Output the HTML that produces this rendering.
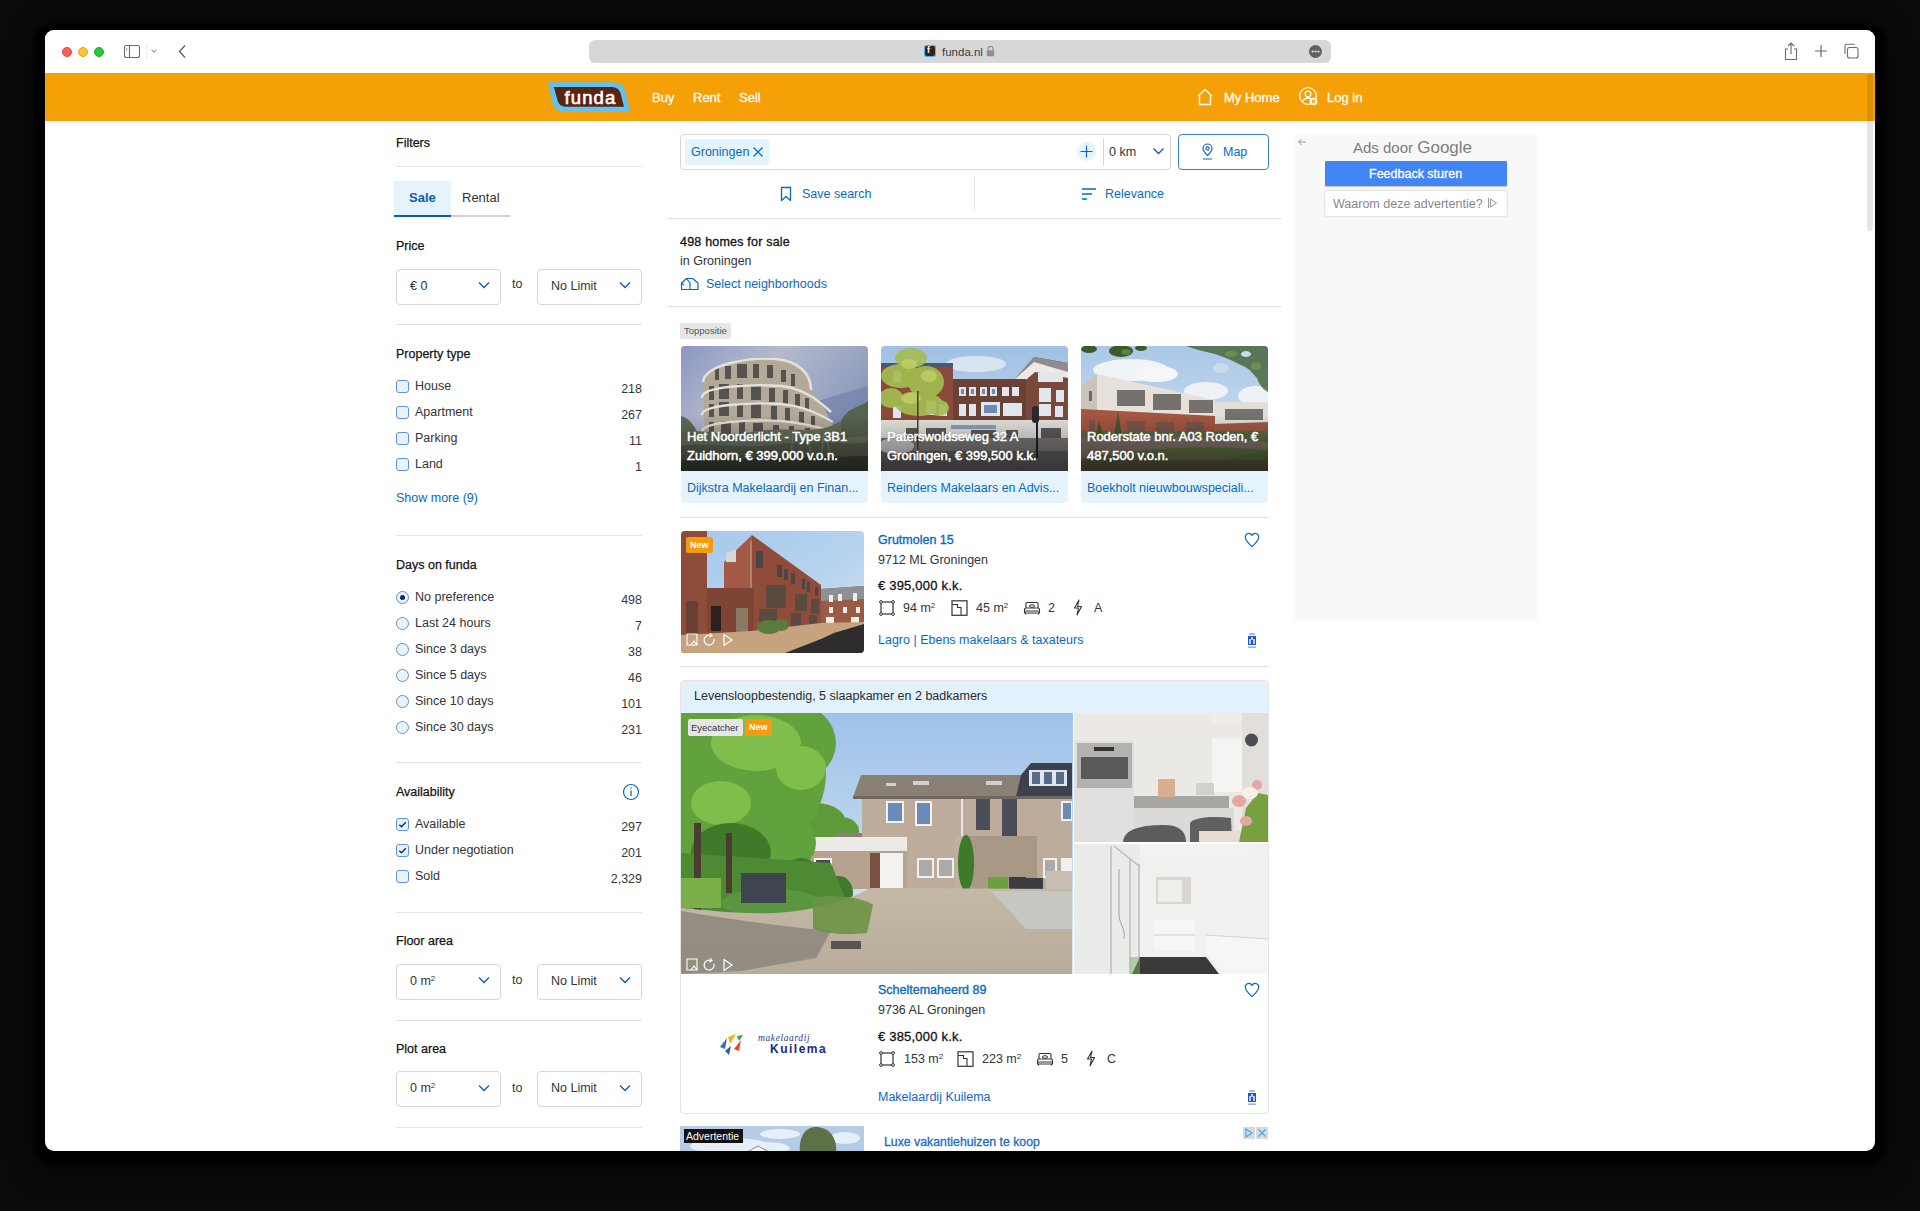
<!DOCTYPE html>
<html><head><meta charset="utf-8">
<style>
*{box-sizing:border-box;margin:0;padding:0}
html,body{width:1920px;height:1211px;overflow:hidden;background:#0b0b0b;font-family:"Liberation Sans",sans-serif}
.a{position:absolute}
#win{position:absolute;left:45px;top:30px;width:1830px;height:1121px;background:#fff;border-radius:9px;overflow:hidden;box-shadow:0 4px 3px 10px #000,0 8px 24px 16px rgba(0,0,0,.55)}
#tb{position:absolute;left:0;top:0;width:1830px;height:43px;background:#fff;border-bottom:0}
#hdr{position:absolute;left:0;top:43px;width:1830px;height:48px;background:#f4a006}
.t{position:absolute;white-space:nowrap;line-height:1}
.lbl{font-size:12.5px;color:#343434}
.hd{font-size:12.5px;color:#141414;-webkit-text-stroke:0.25px #141414}
.cnt{font-size:12.5px;color:#383838;text-align:right}
.hr{position:absolute;height:1px;background:#e3e3e3}
.cb{position:absolute;width:13px;height:13px;border:1px solid #5d93d1;border-radius:3px;background:#e8f4fd}
.rd{position:absolute;width:13px;height:13px;border:1px solid #5d93d1;border-radius:50%;background:#e8f4fd}
.sel{position:absolute;height:36px;border:1px solid #d6d6d6;border-radius:4px;background:#fff}
.blue{color:#0b6ab8}
</style></head>
<body>
<div id="win">
  <div id="tb">
    <div class="a" style="left:16.5px;top:16.5px;width:10.5px;height:10.5px;border-radius:50%;background:#fd5b55;border:0.5px solid #e0443e"></div>
    <div class="a" style="left:32.5px;top:16.5px;width:10.5px;height:10.5px;border-radius:50%;background:#fec52f;border:0.5px solid #e2a52a"></div>
    <div class="a" style="left:48.5px;top:16.5px;width:10.5px;height:10.5px;border-radius:50%;background:#28c840;border:0.5px solid #1aab29"></div>
    <!-- sidebar icon -->
    <svg class="a" style="left:78px;top:14px" width="18" height="15" viewBox="0 0 18 15"><rect x="1.5" y="1.5" width="15" height="12" rx="2" fill="none" stroke="#6b6b6b" stroke-width="1.1"/><line x1="6.5" y1="1.5" x2="6.5" y2="13.5" stroke="#6b6b6b" stroke-width="1.1"/><line x1="3.8" y1="4" x2="3.8" y2="7" stroke="#8a8a8a" stroke-width="0.8"/></svg>
    <div class="a" style="left:101px;top:14px;width:1px;height:15px;background:#ececec"></div>
    <svg class="a" style="left:105px;top:18px" width="8" height="6" viewBox="0 0 8 6"><path d="M1.5 1.8 L4 4.2 L6.5 1.8" fill="none" stroke="#6b6b6b" stroke-width="1"/></svg>
    <svg class="a" style="left:131.5px;top:14px" width="10" height="15" viewBox="0 0 10 15"><path d="M8 1.5 L2.5 7.5 L8 13.5" fill="none" stroke="#5b5b5b" stroke-width="1.3"/></svg>
    <!-- url bar -->
    <div class="a" style="left:544px;top:10px;width:742px;height:23px;border-radius:6px;background:#d7d7d7"></div>
    <div class="a" style="left:879px;top:15px;width:12px;height:12px;border-radius:2px;background:#4fb4e8"></div>
    <div class="a" style="left:880px;top:16px;width:10px;height:10px;border-radius:2px;background:#3b1e14"></div>
    <div class="t" style="left:882px;top:16px;font-size:9px;color:#fff;font-weight:bold">f</div>
    <div class="t" style="left:897px;top:17px;font-size:11.5px;color:#3c3c3c">funda.nl</div>
    <svg class="a" style="left:941px;top:15px" width="9" height="12" viewBox="0 0 9 12"><path d="M2 5.5 V3.8 A2.5 2.5 0 0 1 7 3.8 V5.5" fill="none" stroke="#8e8e8e" stroke-width="1.2"/><rect x="0.8" y="5.3" width="7.4" height="6" rx="1" fill="#8e8e8e"/></svg>
    <div class="a" style="left:1264px;top:15px;width:13px;height:13px;border-radius:50%;background:#606060"></div>
    <svg class="a" style="left:1264px;top:15px" width="13" height="13" viewBox="0 0 13 13"><circle cx="3.6" cy="6.5" r="1.1" fill="#e8e8e8"/><circle cx="6.5" cy="6.5" r="1.1" fill="#e8e8e8"/><circle cx="9.4" cy="6.5" r="1.1" fill="#e8e8e8"/></svg>
    <!-- right icons -->
    <svg class="a" style="left:1738px;top:11px" width="16" height="20" viewBox="0 0 16 20"><path d="M5 8 H2.5 V18.5 H13.5 V8 H11" fill="none" stroke="#6b6b6b" stroke-width="1.1"/><path d="M8 13 V2 M5 5 L8 2 L11 5" fill="none" stroke="#6b6b6b" stroke-width="1.1"/></svg>
    <svg class="a" style="left:1768px;top:13px" width="16" height="16" viewBox="0 0 16 16"><path d="M8 2 V14 M2 8 H14" fill="none" stroke="#6b6b6b" stroke-width="1.2"/></svg>
    <svg class="a" style="left:1797px;top:12px" width="18" height="18" viewBox="0 0 18 18"><rect x="5.5" y="5.5" width="10.5" height="10.5" rx="2" fill="none" stroke="#6b6b6b" stroke-width="1.1"/><path d="M3 12 V4 A1.8 1.8 0 0 1 4.8 2.2 H12.5" fill="none" stroke="#6b6b6b" stroke-width="1.1"/></svg>
  </div>
  <div id="hdr">
    <svg class="a" style="left:500px;top:8px" width="86" height="32" viewBox="0 0 86 32">
      <path d="M3 1.3 H66 C74 1.3 78 4 80 9 L85 30.7 H21 C13 30.7 9 27 7.5 22 Z" fill="#5ec3f2"/>
      <path d="M8.8 6 H66 C71 6 74 8 75.5 12 L79 25.8 H22 C16 25.8 13.5 23 12.5 19 Z" fill="#5a2415"/>
      <text x="19.5" y="22.6" font-family="Liberation Sans" font-size="18.5" fill="#fff" stroke="#fff" stroke-width="0.6" letter-spacing="1.1">funda</text>
    </svg>
    <div class="t" style="left:607px;top:18px;font-size:13px;color:#fff;-webkit-text-stroke:0.3px #fff">Buy</div>
    <div class="t" style="left:648px;top:18px;font-size:13px;color:#fff;-webkit-text-stroke:0.3px #fff">Rent</div>
    <div class="t" style="left:694px;top:18px;font-size:13px;color:#fff;-webkit-text-stroke:0.3px #fff">Sell</div>
    <svg class="a" style="left:1150px;top:14px" width="20" height="20" viewBox="0 0 20 20"><path d="M3 9 L10 2.5 L17 9 M4.5 8 V17.5 H15.5 V8" fill="none" stroke="#fff" stroke-width="1.4" stroke-linejoin="round"/></svg>
    <div class="t" style="left:1179px;top:18px;font-size:13px;color:#fff;-webkit-text-stroke:0.3px #fff">My Home</div>
    <svg class="a" style="left:1253px;top:13px" width="22" height="22" viewBox="0 0 22 22"><circle cx="10" cy="10" r="8.3" fill="none" stroke="#fff" stroke-width="1.3"/><circle cx="10" cy="8" r="2.8" fill="none" stroke="#fff" stroke-width="1.3"/><path d="M4.5 15.5 C6 12.8 8 12 10 12 C11 12 12 12.2 13 12.6" fill="none" stroke="#fff" stroke-width="1.3"/><circle cx="15.5" cy="15.5" r="3.8" fill="#fff"/><path d="M14 14 L17 17 M17 14 L14 17" stroke="#f4a006" stroke-width="1.1"/></svg>
    <div class="t" style="left:1282px;top:18px;font-size:13px;color:#fff;-webkit-text-stroke:0.3px #fff">Log in</div>
  </div>
  <div id="pg" class="a" style="left:-45px;top:-30px;width:1920px;height:1211px">
  <!-- LEFT PANEL -->
  <div class="t hd" style="left:396px;top:137px">Filters</div>
  <div class="hr" style="left:396px;top:166px;width:246px"></div>
  <div class="a" style="left:394px;top:181px;width:57px;height:36px;background:#e5f3fd"></div>
  <div class="a" style="left:394px;top:215px;width:57px;height:2px;background:#0b5cb0"></div>
  <div class="a" style="left:451px;top:215px;width:59px;height:2px;background:#d3d3d3"></div>
  <div class="t" style="left:409px;top:191px;font-size:13px;color:#0b5cb0;font-weight:bold">Sale</div>
  <div class="t" style="left:462px;top:191px;font-size:13px;color:#333">Rental</div>
  <div class="t hd" style="left:396px;top:240px">Price</div>
  <div class="sel" style="left:396px;top:269px;width:105px"></div>
  <div class="t lbl" style="left:410px;top:280px">€ 0</div>
  <div class="t lbl" style="left:512px;top:278px">to</div>
  <div class="sel" style="left:537px;top:269px;width:105px"></div>
  <div class="t lbl" style="left:551px;top:280px">No Limit</div>
  <div class="hr" style="left:396px;top:324px;width:246px"></div>

  <div class="t hd" style="left:396px;top:348px">Property type</div>
  <div class="cb" style="left:396px;top:380px"></div><div class="t lbl" style="left:415px;top:380px">House</div><div class="t cnt" style="left:600px;width:42px;top:383px">218</div>
  <div class="cb" style="left:396px;top:406px"></div><div class="t lbl" style="left:415px;top:406px">Apartment</div><div class="t cnt" style="left:600px;width:42px;top:409px">267</div>
  <div class="cb" style="left:396px;top:432px"></div><div class="t lbl" style="left:415px;top:432px">Parking</div><div class="t cnt" style="left:600px;width:42px;top:435px">11</div>
  <div class="cb" style="left:396px;top:458px"></div><div class="t lbl" style="left:415px;top:458px">Land</div><div class="t cnt" style="left:600px;width:42px;top:461px">1</div>
  <div class="t lbl blue" style="left:396px;top:492px">Show more (9)</div>
  <div class="hr" style="left:396px;top:535px;width:246px"></div>

  <div class="t hd" style="left:396px;top:559px">Days on funda</div>
  <div class="rd" style="left:396px;top:591px"></div><div class="a" style="left:400px;top:595px;width:5px;height:5px;border-radius:50%;background:#0a2a6b"></div><div class="t lbl" style="left:415px;top:591px">No preference</div><div class="t cnt" style="left:600px;width:42px;top:594px">498</div>
  <div class="rd" style="left:396px;top:617px"></div><div class="t lbl" style="left:415px;top:617px">Last 24 hours</div><div class="t cnt" style="left:600px;width:42px;top:620px">7</div>
  <div class="rd" style="left:396px;top:643px"></div><div class="t lbl" style="left:415px;top:643px">Since 3 days</div><div class="t cnt" style="left:600px;width:42px;top:646px">38</div>
  <div class="rd" style="left:396px;top:669px"></div><div class="t lbl" style="left:415px;top:669px">Since 5 days</div><div class="t cnt" style="left:600px;width:42px;top:672px">46</div>
  <div class="rd" style="left:396px;top:695px"></div><div class="t lbl" style="left:415px;top:695px">Since 10 days</div><div class="t cnt" style="left:600px;width:42px;top:698px">101</div>
  <div class="rd" style="left:396px;top:721px"></div><div class="t lbl" style="left:415px;top:721px">Since 30 days</div><div class="t cnt" style="left:600px;width:42px;top:724px">231</div>
  <div class="hr" style="left:396px;top:762px;width:246px"></div>

  <div class="t hd" style="left:396px;top:786px">Availability</div>
  <svg class="a" style="left:622px;top:783px" width="18" height="18" viewBox="0 0 18 18"><circle cx="9" cy="9" r="7.5" fill="none" stroke="#0b6ab8" stroke-width="1.2"/><path d="M9 7.5 V13 M9 4.6 V5.8" stroke="#0b6ab8" stroke-width="1.3"/></svg>
  <div class="cb" style="left:396px;top:818px"></div><svg class="a" style="left:396px;top:818px" width="13" height="13" viewBox="0 0 13 13"><path d="M3.3 6.7 L5.5 8.8 L9.8 4.3" fill="none" stroke="#0a2a6b" stroke-width="1.3"/></svg><div class="t lbl" style="left:415px;top:818px">Available</div><div class="t cnt" style="left:590px;width:52px;top:821px">297</div>
  <div class="cb" style="left:396px;top:844px"></div><svg class="a" style="left:396px;top:844px" width="13" height="13" viewBox="0 0 13 13"><path d="M3.3 6.7 L5.5 8.8 L9.8 4.3" fill="none" stroke="#0a2a6b" stroke-width="1.3"/></svg><div class="t lbl" style="left:415px;top:844px">Under negotiation</div><div class="t cnt" style="left:590px;width:52px;top:847px">201</div>
  <div class="cb" style="left:396px;top:870px"></div><div class="t lbl" style="left:415px;top:870px">Sold</div><div class="t cnt" style="left:590px;width:52px;top:873px">2,329</div>
  <div class="hr" style="left:396px;top:912px;width:246px"></div>

  <div class="t hd" style="left:396px;top:935px">Floor area</div>
  <div class="sel" style="left:396px;top:964px;width:105px"></div>
  <div class="t lbl" style="left:410px;top:975px">0 m<sup style="font-size:8px;vertical-align:4px">2</sup></div>
  <div class="t lbl" style="left:512px;top:974px">to</div>
  <div class="sel" style="left:537px;top:964px;width:105px"></div>
  <div class="t lbl" style="left:551px;top:975px">No Limit</div>
  <div class="hr" style="left:396px;top:1020px;width:246px"></div>

  <div class="t hd" style="left:396px;top:1043px">Plot area</div>
  <div class="sel" style="left:396px;top:1071px;width:105px"></div>
  <div class="t lbl" style="left:410px;top:1082px">0 m<sup style="font-size:8px;vertical-align:4px">2</sup></div>
  <div class="t lbl" style="left:512px;top:1082px">to</div>
  <div class="sel" style="left:537px;top:1071px;width:105px"></div>
  <div class="t lbl" style="left:551px;top:1082px">No Limit</div>
  <div class="hr" style="left:396px;top:1127px;width:246px"></div>
  <svg class="a" style="left:478px;top:281px" width="12" height="8" viewBox="0 0 12 8"><path d="M1 1.5 L6 6.5 L11 1.5" fill="none" stroke="#0b5cb0" stroke-width="1.3"/></svg><svg class="a" style="left:619px;top:281px" width="12" height="8" viewBox="0 0 12 8"><path d="M1 1.5 L6 6.5 L11 1.5" fill="none" stroke="#0b5cb0" stroke-width="1.3"/></svg><svg class="a" style="left:478px;top:976px" width="12" height="8" viewBox="0 0 12 8"><path d="M1 1.5 L6 6.5 L11 1.5" fill="none" stroke="#0b5cb0" stroke-width="1.3"/></svg><svg class="a" style="left:619px;top:976px" width="12" height="8" viewBox="0 0 12 8"><path d="M1 1.5 L6 6.5 L11 1.5" fill="none" stroke="#0b5cb0" stroke-width="1.3"/></svg><svg class="a" style="left:478px;top:1084px" width="12" height="8" viewBox="0 0 12 8"><path d="M1 1.5 L6 6.5 L11 1.5" fill="none" stroke="#0b5cb0" stroke-width="1.3"/></svg><svg class="a" style="left:619px;top:1084px" width="12" height="8" viewBox="0 0 12 8"><path d="M1 1.5 L6 6.5 L11 1.5" fill="none" stroke="#0b5cb0" stroke-width="1.3"/></svg>
  <!-- MAIN COLUMN -->
  <div class="a" style="left:680px;top:134px;width:491px;height:36px;border:1px solid #d6d6d6;border-radius:4px"></div>
  <div class="a" style="left:685px;top:139px;width:84px;height:26px;background:#e5f3fd;border-radius:3px"></div>
  <div class="t" style="left:691px;top:146px;font-size:12.5px;color:#0b6ab8">Groningen</div>
  <svg class="a" style="left:752px;top:146px" width="12" height="12" viewBox="0 0 12 12"><path d="M1.5 1.5 L10.5 10.5 M10.5 1.5 L1.5 10.5" stroke="#0b6ab8" stroke-width="1.2"/></svg>
  <div class="a" style="left:1077px;top:142px;width:19px;height:19px;border-radius:50%;background:#e5f3fd"></div>
  <svg class="a" style="left:1079px;top:144px" width="15" height="15" viewBox="0 0 15 15"><path d="M7.5 1.5 V13.5 M1.5 7.5 H13.5" stroke="#0b6ab8" stroke-width="1.2"/></svg>
  <div class="a" style="left:1103px;top:138px;width:1px;height:28px;background:#d6d6d6"></div>
  <div class="t lbl" style="left:1109px;top:146px">0 km</div>
  <svg class="a" style="left:1152px;top:147px" width="13" height="9" viewBox="0 0 13 9"><path d="M1.5 1.5 L6.5 6.5 L11.5 1.5" fill="none" stroke="#0b5cb0" stroke-width="1.3"/></svg>
  <div class="a" style="left:1178px;top:134px;width:91px;height:36px;border:1px solid #3b7cc6;border-radius:4px"></div>
  <svg class="a" style="left:1200px;top:143px" width="15" height="18" viewBox="0 0 15 18"><path d="M7.5 12.5 C4.5 9.5 3 7.5 3 5.5 A4.5 4.5 0 0 1 12 5.5 C12 7.5 10.5 9.5 7.5 12.5 Z" fill="none" stroke="#0b6ab8" stroke-width="1.2"/><circle cx="7.5" cy="5.5" r="1.6" fill="none" stroke="#0b6ab8" stroke-width="1.1"/><path d="M3 16 H12" stroke="#0b6ab8" stroke-width="1.2"/></svg>
  <div class="t" style="left:1223px;top:146px;font-size:12.5px;color:#0b6ab8">Map</div>

  <svg class="a" style="left:779px;top:186px" width="14" height="16" viewBox="0 0 14 16"><path d="M2.5 1.5 H11.5 V14.5 L7 10.5 L2.5 14.5 Z" fill="none" stroke="#0b6ab8" stroke-width="1.3" stroke-linejoin="round"/></svg>
  <div class="t" style="left:802px;top:188px;font-size:12.5px;color:#0b6ab8">Save search</div>
  <div class="a" style="left:974px;top:176px;width:1px;height:36px;background:#e6e6e6"></div>
  <svg class="a" style="left:1081px;top:187px" width="16" height="14" viewBox="0 0 16 14"><path d="M1 2 H15 M1 7 H11 M1 12 H6" stroke="#0b6ab8" stroke-width="1.3"/></svg>
  <div class="t" style="left:1105px;top:188px;font-size:12.5px;color:#0b6ab8">Relevance</div>
  <div class="hr" style="left:667px;top:218px;width:615px"></div>

  <div class="t" style="left:680px;top:236px;font-size:12.5px;color:#111;-webkit-text-stroke:0.3px #111;letter-spacing:0.2px">498 homes for sale</div>
  <div class="t lbl" style="left:680px;top:255px">in Groningen</div>
  <svg class="a" style="left:680px;top:276px" width="20" height="15" viewBox="0 0 20 15"><path d="M1.5 13.5 V7 L6.5 2.5 H12.5 L18 7 V13.5 Z M6.5 2.5 L10 7 V13.5 M1.5 7 L4 9" fill="none" stroke="#0b6ab8" stroke-width="1.2" stroke-linejoin="round"/></svg>
  <div class="t" style="left:706px;top:278px;font-size:12.5px;color:#0b6ab8">Select neighborhoods</div>
  <div class="hr" style="left:667px;top:306px;width:615px"></div>

  <div class="a" style="left:680px;top:323px;width:51px;height:16px;background:#e6e6e6;border-radius:2px"></div>
  <div class="t" style="left:684px;top:326px;font-size:9.5px;color:#555">Toppositie</div>
  <!-- TOP CARDS -->
  <div class="a" style="left:681px;top:346px;width:187px;height:157px;border-radius:4px;overflow:hidden;background:#e5f3fd">
    <svg class="a" style="left:0;top:0" width="187" height="125" viewBox="0 0 187 125" preserveAspectRatio="none">
      <defs><linearGradient id="s1" x1="0" y1="0" x2="1" y2="0.6"><stop offset="0" stop-color="#8a97c6"/><stop offset=".4" stop-color="#b4bacb"/><stop offset=".75" stop-color="#98a4c2"/><stop offset="1" stop-color="#7f8eb6"/></linearGradient>
      <linearGradient id="ov" x1="0" y1="0" x2="0" y2="1"><stop offset="0" stop-color="#000" stop-opacity="0"/><stop offset=".55" stop-color="#000" stop-opacity="0"/><stop offset="1" stop-color="#000" stop-opacity=".45"/></linearGradient>
      <filter id="bl" x="0" y="0" width="1" height="1"><feGaussianBlur stdDeviation="0.5"/></filter></defs>
      <rect width="187" height="125" fill="url(#s1)"/>
      <path d="M120 60 L187 40 L187 70 L140 80 Z" fill="#6f7ea6" opacity=".6"/>
      <g filter="url(#bl)">
      <path d="M24 100 L22 34 C30 18 70 12 95 14 C118 17 128 30 130 42 C140 55 148 70 152 82 L152 100 Z" fill="#b3a999"/>
      <g fill="#55524f">
        <rect x="34" y="22" width="4" height="12"/><rect x="44" y="20" width="6" height="13"/><rect x="56" y="18" width="10" height="14"/><rect x="72" y="18" width="6" height="14"/><rect x="86" y="19" width="6" height="13"/><rect x="100" y="24" width="5" height="12"/><rect x="110" y="28" width="4" height="12"/>
        <rect x="28" y="40" width="5" height="14"/><rect x="38" y="38" width="10" height="15"/><rect x="56" y="38" width="6" height="15"/><rect x="70" y="40" width="10" height="14"/><rect x="88" y="42" width="6" height="14"/><rect x="102" y="44" width="5" height="14"/><rect x="114" y="48" width="5" height="13"/><rect x="124" y="52" width="4" height="12"/>
        <rect x="28" y="58" width="5" height="13"/><rect x="38" y="56" width="10" height="14"/><rect x="56" y="57" width="6" height="14"/><rect x="70" y="58" width="10" height="14"/><rect x="90" y="60" width="6" height="14"/><rect x="104" y="62" width="5" height="14"/><rect x="118" y="66" width="5" height="12"/><rect x="130" y="70" width="4" height="10"/>
        <rect x="28" y="76" width="5" height="14"/><rect x="40" y="75" width="10" height="14"/><rect x="58" y="76" width="6" height="14"/><rect x="72" y="77" width="10" height="14"/><rect x="92" y="79" width="6" height="14"/><rect x="108" y="80" width="5" height="12"/><rect x="124" y="82" width="5" height="10"/>
      </g>
      <g fill="none" stroke="#e6e1d8" stroke-width="2.4">
        <path d="M22 36 C24 18 70 11 95 13 C118 15 130 28 130 44"/>
        <path d="M21 52 C20 40 70 38 100 40 C120 42 135 52 150 66"/>
        <path d="M21 69 C20 59 70 56 100 58 C122 60 138 68 152 76"/>
        <path d="M21 86 C20 76 70 73 100 75 C124 77 140 82 154 86"/>
      </g>
      <path d="M0 88 C20 80 40 92 70 86 C100 80 130 88 150 80 C165 72 175 70 187 60 L187 125 L0 125 Z" fill="#66705d"/>
      <path d="M0 70 C8 72 14 80 18 90 L0 92 Z" fill="#5d6a58"/>
      <path d="M160 75 C168 60 178 62 187 55 L187 90 L160 92 Z" fill="#56644f"/>
      <path d="M0 100 C30 96 60 104 100 98 C140 94 160 100 187 96 L187 125 L0 125 Z" fill="#545b4c"/>
      <path d="M0 114 L187 110 L187 125 L0 125 Z" fill="#3b3f36"/>
      <g stroke="#8d9284" stroke-width="1" opacity=".7"><path d="M130 112 L128 92"/><path d="M140 110 L143 90"/><path d="M150 112 L146 94"/><path d="M110 108 L112 90"/></g>
      </g>
      <rect width="187" height="125" fill="url(#ov)"/>
    </svg>
    <div class="t" style="left:6px;top:84px;font-size:13px;color:#fff;-webkit-text-stroke:0.55px #fff;text-shadow:0 0 2px rgba(0,0,0,.45)">Het Noorderlicht - Type 3B1</div>
    <div class="t" style="left:6px;top:103px;font-size:13px;color:#fff;-webkit-text-stroke:0.55px #fff;text-shadow:0 0 2px rgba(0,0,0,.45)">Zuidhorn, € 399,000 v.o.n.</div>
    <div class="t" style="left:6px;top:136px;font-size:12.5px;color:#0b6ab8">Dijkstra Makelaardij en Finan...</div>
  </div>
  <div class="a" style="left:881px;top:346px;width:187px;height:157px;border-radius:4px;overflow:hidden;background:#e5f3fd">
    <svg class="a" style="left:0;top:0" width="187" height="125" viewBox="0 0 187 125" preserveAspectRatio="none">
      <defs><linearGradient id="s2" x1="0" y1="0" x2="0" y2="1"><stop offset="0" stop-color="#9fc0e4"/><stop offset="1" stop-color="#d5e0ea"/></linearGradient></defs>
      <rect width="187" height="125" fill="url(#s2)"/>
      <g filter="url(#bl)">
      <ellipse cx="95" cy="18" rx="30" ry="8" fill="#e4ecf2" opacity=".8"/>
      <path d="M134 33 L153 11 L187 17 L187 95 L134 95 Z" fill="#7a4a3a"/>
      <path d="M134 33 L153 11 L187 17 L187 30 L155 24 L140 38 Z" fill="#8e8c92"/>
      <path d="M134 33 L153 16 L187 26 L187 32 L154 26 L138 40 Z" fill="#ece8e2"/>
      <rect x="70" y="33" width="75" height="45" fill="#6a4236"/>
      <rect x="0" y="17" width="72" height="78" fill="#8a4c3c"/>
      <rect x="0" y="17" width="72" height="4" fill="#4e5870"/>
      <g fill="#dfe6ee"><rect x="78" y="41" width="7" height="9"/><rect x="88" y="41" width="7" height="9"/><rect x="99" y="41" width="7" height="9"/><rect x="109" y="41" width="7" height="9"/><rect x="121" y="41" width="7" height="9"/><rect x="131" y="41" width="7" height="9"/>
        <rect x="78" y="58" width="7" height="12"/><rect x="88" y="58" width="7" height="12"/><rect x="100" y="56" width="19" height="14"/><rect x="122" y="57" width="19" height="13"/>
        <rect x="157" y="27" width="25" height="9"/><rect x="158" y="42" width="12" height="14"/><rect x="175" y="44" width="8" height="12"/><rect x="158" y="58" width="12" height="12"/><rect x="174" y="60" width="8" height="11"/>
        <rect x="12" y="25" width="8" height="12"/><rect x="12" y="60" width="8" height="12"/><rect x="45" y="55" width="10" height="14"/><rect x="58" y="58" width="8" height="12"/></g>
      <g fill="#6a8ab8"><rect x="80" y="43" width="3" height="5"/><rect x="90" y="43" width="3" height="5"/><rect x="101" y="43" width="3" height="5"/><rect x="111" y="43" width="3" height="5"/><rect x="103" y="59" width="13" height="8"/></g>
      <rect x="0" y="74" width="187" height="22" fill="#e4e2dc"/>
      <g fill="#5e5a58"><rect x="25" y="82" width="12" height="12"/><rect x="45" y="82" width="20" height="12"/><rect x="90" y="84" width="25" height="10"/><rect x="125" y="84" width="12" height="10"/><rect x="160" y="82" width="20" height="12"/></g>
      <rect x="70" y="79" width="45" height="4" fill="#8ca0c0"/>
      <rect x="0" y="92" width="187" height="33" fill="#7a7876"/>
      <rect x="0" y="105" width="187" height="20" fill="#605e5e"/>
      <g fill="#a4bc52" opacity=".92"><ellipse cx="30" cy="12" rx="16" ry="10"/><ellipse cx="20" cy="30" rx="20" ry="12"/><ellipse cx="45" cy="36" rx="18" ry="16"/><ellipse cx="38" cy="58" rx="24" ry="12"/><ellipse cx="10" cy="52" rx="12" ry="10"/><ellipse cx="58" cy="62" rx="10" ry="8"/></g>
      <g fill="#c4d468" opacity=".7"><ellipse cx="28" cy="18" rx="8" ry="5"/><ellipse cx="48" cy="30" rx="8" ry="6"/><ellipse cx="30" cy="52" rx="10" ry="6"/></g>
      <rect x="36" y="45" width="1.5" height="60" fill="#4b3a2a"/>
      <rect x="155" y="72" width="2" height="40" fill="#222"/>
      <rect x="151" y="60" width="7" height="17" rx="3" fill="#2a2a2e"/>
      <ellipse cx="15" cy="100" rx="18" ry="8" fill="#c8c8cc"/>
      </g>
      <rect width="187" height="125" fill="url(#ov)"/>
    </svg>
    <div class="t" style="left:6px;top:84px;font-size:13px;color:#fff;-webkit-text-stroke:0.55px #fff;text-shadow:0 0 2px rgba(0,0,0,.45)">Paterswoldseweg 32 A</div>
    <div class="t" style="left:6px;top:103px;font-size:13px;color:#fff;-webkit-text-stroke:0.55px #fff;text-shadow:0 0 2px rgba(0,0,0,.45)">Groningen, € 399,500 k.k.</div>
    <div class="t" style="left:6px;top:136px;font-size:12.5px;color:#0b6ab8">Reinders Makelaars en Advis...</div>
  </div>
  <div class="a" style="left:1081px;top:346px;width:187px;height:157px;border-radius:4px;overflow:hidden;background:#e5f3fd">
    <svg class="a" style="left:0;top:0" width="187" height="125" viewBox="0 0 187 125" preserveAspectRatio="none">
      <defs><linearGradient id="s3" x1="0" y1="0" x2="0" y2="1"><stop offset="0" stop-color="#a9c8e8"/><stop offset="1" stop-color="#d6e2ee"/></linearGradient></defs>
      <rect width="187" height="125" fill="url(#s3)"/>
      <g filter="url(#bl)">
      <ellipse cx="50" cy="24" rx="38" ry="11" fill="#f0f3f6"/><ellipse cx="75" cy="28" rx="22" ry="8" fill="#f4f6f8"/><ellipse cx="125" cy="45" rx="22" ry="9" fill="#eef2f6"/><ellipse cx="175" cy="50" rx="18" ry="10" fill="#eef2f6"/>
      <path d="M16 28 L134 54 L134 70 L16 68 Z" fill="#e6e1da"/>
      <path d="M0 40 L16 28 L16 68 L0 68 Z" fill="#c9c3ba"/>
      <rect x="134" y="56" width="53" height="30" fill="#e2ded8"/>
      <g fill="#5a5654" opacity=".8"><rect x="36" y="44" width="28" height="16"/><rect x="72" y="48" width="28" height="16"/><rect x="108" y="54" width="24" height="13"/><rect x="144" y="63" width="38" height="11"/><rect x="8" y="45" width="3" height="10"/></g>
      <path d="M0 63 L134 70 L134 85 L0 87 Z" fill="#a35640"/>
      <path d="M134 78 L187 76 L187 87 L134 87 Z" fill="#9e5a46"/>
      <g fill="#555" opacity=".55"><rect x="8" y="74" width="6" height="11"/><rect x="46" y="75" width="18" height="11"/><rect x="75" y="76" width="18" height="10"/><rect x="105" y="76" width="18" height="10"/></g>
      <rect x="0" y="85" width="187" height="40" fill="#5b6a42"/>
      <path d="M0 92 C40 90 100 88 187 96 L187 104 C120 98 70 102 0 112 Z" fill="#7e6e66"/>
      <path d="M95 125 L187 104 L187 125 Z" fill="#4e6a36"/>
      <rect x="0" y="114" width="187" height="11" fill="#55523e"/>
      <g fill="#3e5a2a"><path d="M105 0 L187 0 L187 46 C182 44 178 38 176 32 C172 28 168 22 162 20 C154 16 146 12 134 8 C124 6 114 3 105 0 Z" opacity=".75"/><ellipse cx="40" cy="5" rx="12" ry="6"/><ellipse cx="8" cy="3" rx="8" ry="4"/><ellipse cx="60" cy="2" rx="6" ry="3"/></g>
      <g fill="#7aa04a" opacity=".6"><ellipse cx="150" cy="8" rx="6" ry="3"/><ellipse cx="175" cy="20" rx="5" ry="4"/><ellipse cx="45" cy="6" rx="5" ry="3"/></g>
      <g fill="#c8daec"><ellipse cx="140" cy="22" rx="8" ry="5"/><ellipse cx="165" cy="8" rx="5" ry="3"/></g>
      <path d="M33 90 L37 66 L41 90 Z" fill="#3e5a30"/>
      <path d="M15 90 L18 75 L22 90 Z" fill="#3e5a30"/>
      </g>
      <rect width="187" height="125" fill="url(#ov)"/>
    </svg>
    <div class="t" style="left:6px;top:84px;font-size:13px;color:#fff;-webkit-text-stroke:0.55px #fff;text-shadow:0 0 2px rgba(0,0,0,.45)">Roderstate bnr. A03 Roden, €</div>
    <div class="t" style="left:6px;top:103px;font-size:13px;color:#fff;-webkit-text-stroke:0.55px #fff;text-shadow:0 0 2px rgba(0,0,0,.45)">487,500 v.o.n.</div>
    <div class="t" style="left:6px;top:136px;font-size:12.5px;color:#0b6ab8">Boekholt nieuwbouwspeciali...</div>
  </div>
  <div class="hr" style="left:680px;top:517px;width:589px"></div>
  <!-- LISTING 1 -->
  <div class="a" style="left:681px;top:531px;width:183px;height:122px;border-radius:4px;overflow:hidden">
    <svg class="a" style="left:0;top:0" width="183" height="122" viewBox="0 0 183 122" preserveAspectRatio="none">
      <defs><linearGradient id="s4" x1="0" y1="0" x2="1" y2="1"><stop offset="0" stop-color="#a4c8ec"/><stop offset=".6" stop-color="#b8d4ee"/><stop offset="1" stop-color="#dde8f0"/></linearGradient></defs>
      <rect width="183" height="122" fill="url(#s4)"/>
      <path d="M140 58 L183 55 L183 95 L140 95 Z" fill="#9a5a44"/>
      <path d="M140 58 L183 55 L183 68 L140 70 Z" fill="#8e9098"/>
      <g fill="#f0eeea"><rect x="148" y="64" width="4" height="7"/><rect x="157" y="63" width="4" height="7"/><rect x="172" y="62" width="4" height="8"/><rect x="148" y="76" width="4" height="6"/><rect x="162" y="76" width="4" height="6"/><rect x="175" y="76" width="4" height="6"/><rect x="145" y="86" width="8" height="6"/><rect x="170" y="86" width="8" height="6"/></g>
      <path d="M71 4 L140 54 L140 93 L71 103 Z" fill="#8f4c3a"/>
      <path d="M43 31 L71 4 L71 103 L43 103 Z" fill="#a35a44"/>
      <path d="M45 22 L55 18 L55 31 L45 31 Z" fill="#d8d8d6"/>
      <rect x="69" y="10" width="2" height="93" fill="#b08068"/>
      <rect x="25" y="57" width="48" height="46" fill="#7e4434"/>
      <rect x="30" y="75" width="10" height="25" fill="#2a2220"/>
      <rect x="55" y="77" width="12" height="26" fill="#8a7a64"/>
      <rect x="0" y="0" width="26" height="122" fill="#8e4c3a"/>
      <rect x="5" y="70" width="12" height="35" fill="#6a4034"/>
      <g fill="#4a4648"><rect x="75" y="20" width="7" height="17"/><rect x="96" y="34" width="5" height="12"/><rect x="103" y="38" width="4" height="11"/><rect x="110" y="42" width="4" height="11"/><rect x="121" y="48" width="3" height="10"/><rect x="126" y="51" width="3" height="10"/><rect x="134" y="56" width="3" height="9"/></g>
      <g fill="#5a4a40"><rect x="85" y="54" width="20" height="23"/><rect x="114" y="63" width="12" height="17"/><rect x="130" y="68" width="8" height="15"/><rect x="78" y="78" width="18" height="20"/><rect x="110" y="82" width="10" height="14"/><rect x="128" y="84" width="8" height="10"/></g>
      <path d="M0 104 L70 100 L140 92 L183 91 L183 122 L0 122 Z" fill="#c6a27e"/>
      <path d="M104 122 L140 108 L153 102 L183 93 L183 122 Z" fill="#2e2c2c"/>
      <g fill="#5a7a3e"><ellipse cx="88" cy="96" rx="12" ry="7"/><ellipse cx="100" cy="94" rx="8" ry="6"/></g>
      
    </svg>
    <div class="a" style="left:5px;top:6px;width:27px;height:16px;background:#f49c0e;border-radius:2px"></div>
    <div class="t" style="left:9px;top:10px;font-size:9px;color:#fff;font-weight:bold">New</div>
    <svg class="a" style="left:4px;top:101px" width="52" height="16" viewBox="0 0 52 16"><path d="M2 2 H12 V13 H2 Z M6 13 L9 9 L12 13" fill="none" stroke="#fff" stroke-width="1.1"/><path d="M26 3.5 A5 5 0 1 0 29 7" fill="none" stroke="#fff" stroke-width="1.2"/><path d="M25 1 L27 3.5 L24.5 5" fill="none" stroke="#fff" stroke-width="1.1"/><path d="M39 2.5 V13.5 L47 8 Z" fill="none" stroke="#fff" stroke-width="1.2" stroke-linejoin="round"/></svg>
  </div>
  <div class="t" style="left:878px;top:534px;font-size:12.5px;color:#0b6ab8;-webkit-text-stroke:0.35px #0b6ab8">Grutmolen 15</div>
  <svg class="a" style="left:1243px;top:532px" width="18" height="16" viewBox="0 0 18 16"><path d="M9 14.6 C6.5 12.2 2.8 9 2.4 6 C2 3.3 3.6 1.3 5.8 1.3 C7.3 1.3 8.4 2.2 9 3.4 C9.6 2.2 10.7 1.3 12.2 1.3 C14.4 1.3 16 3.3 15.6 6 C15.2 9 11.5 12.2 9 14.6 Z" fill="none" stroke="#0b6ab8" stroke-width="1.25" stroke-linejoin="round"/></svg>
  <div class="t lbl" style="left:878px;top:554px">9712 ML Groningen</div>
  <div class="t" style="left:878px;top:579px;font-size:13px;color:#111;-webkit-text-stroke:0.3px #111;letter-spacing:0.2px">€ 395,000 k.k.</div>
  <svg class="a" style="left:879px;top:600px" width="16" height="16" viewBox="0 0 16 16"><rect x="2" y="2" width="12" height="12" fill="none" stroke="#333" stroke-width="1.2"/><circle cx="2" cy="2" r="1.4" fill="#fff" stroke="#333" stroke-width="1"/><circle cx="14" cy="2" r="1.4" fill="#fff" stroke="#333" stroke-width="1"/><circle cx="2" cy="14" r="1.4" fill="#fff" stroke="#333" stroke-width="1"/><circle cx="14" cy="14" r="1.4" fill="#fff" stroke="#333" stroke-width="1"/></svg>
  <div class="t lbl" style="left:903px;top:602px">94 m<sup style="font-size:8px;vertical-align:4px">2</sup></div>
  <svg class="a" style="left:951px;top:600px" width="17" height="16" viewBox="0 0 17 16"><rect x="1" y="0.8" width="15" height="14.5" fill="none" stroke="#333" stroke-width="1.2"/><path d="M1 4.5 H6.5 V7.5 H10 V15" fill="none" stroke="#333" stroke-width="1.1"/></svg>
  <div class="t lbl" style="left:976px;top:602px">45 m<sup style="font-size:8px;vertical-align:4px">2</sup></div>
  <svg class="a" style="left:1023px;top:600px" width="18" height="16" viewBox="0 0 18 16"><path d="M3 8 V3.5 Q3 2.5 4 2.5 H14 Q15 2.5 15 3.5 V8 M1.5 13 V9.5 Q1.5 8 3 8 H15 Q16.5 8 16.5 9.5 V13 Z M1.5 11 H16.5 M2.5 13 V14.5 M15.5 13 V14.5" fill="none" stroke="#333" stroke-width="1.1" stroke-linejoin="round"/><ellipse cx="9" cy="6" rx="2.6" ry="1.3" fill="none" stroke="#333" stroke-width="1"/></svg>
  <div class="t lbl" style="left:1048px;top:602px">2</div>
  <svg class="a" style="left:1072px;top:599px" width="12" height="17" viewBox="0 0 12 17"><path d="M7 1 L2.5 9 H6.5 L5 16 L9.5 7.5 H5.5 Z" fill="none" stroke="#333" stroke-width="1.1" stroke-linejoin="round"/></svg>
  <div class="t lbl" style="left:1094px;top:602px">A</div>
  <div class="t" style="left:878px;top:634px;font-size:12.5px;color:#0b6ab8">Lagro | Ebens makelaars &amp; taxateurs</div>
  <svg class="a" style="left:1246px;top:631px" width="12" height="18" viewBox="0 0 12 18"><g fill="#1f55c0"><path d="M3 4 L3.5 1.5 L5 2.8 L6 1 L7 2.8 L8.5 1.5 L9 4 Z" opacity=".45"/><rect x="2" y="5" width="8" height="9"/><rect x="2" y="15.5" width="8" height="1.3" opacity=".55"/></g><g fill="#fff"><rect x="3.3" y="8" width="1.4" height="5"/><rect x="7.3" y="8" width="1.4" height="5"/><rect x="5.3" y="6" width="1.4" height="3"/></g></svg>
  <div class="hr" style="left:680px;top:666px;width:589px"></div>
  <!-- LISTING 2 -->
  <div class="a" style="left:680px;top:680px;width:589px;height:434px;border:1px solid #e4e4e4;border-radius:4px;overflow:hidden">
    <div class="a" style="left:0;top:0;width:589px;height:32px;background:#e2f2fc"></div>
    <div class="t" style="left:13px;top:9px;font-size:12.5px;color:#2b2b2b">Levensloopbestendig, 5 slaapkamer en 2 badkamers</div>
    <svg class="a" style="left:0;top:32px" width="392" height="261" viewBox="0 0 392 261" preserveAspectRatio="none">
      <defs><linearGradient id="s5" x1="0" y1="0" x2="0" y2="1"><stop offset="0" stop-color="#9fc2ea"/><stop offset=".6" stop-color="#c4daf0"/><stop offset="1" stop-color="#dde8f2"/></linearGradient>
      <linearGradient id="pv" x1="0" y1="0" x2="0" y2="1"><stop offset="0" stop-color="#c4b8a6"/><stop offset="1" stop-color="#b8ac9a"/></linearGradient></defs>
      <rect width="392" height="261" fill="url(#s5)"/>
      <g fill="#5e9a3a"><ellipse cx="135" cy="110" rx="30" ry="20"/><ellipse cx="160" cy="118" rx="18" ry="14"/></g>
      <rect x="155" y="120" width="40" height="10" fill="#8a8078"/>
      <path d="M172 84 L180 62 L342 62 L350 84 Z" fill="#8b8074"/>
      <path d="M340 62 L350 50 L391 50 L391 84 L335 84 Z" fill="#3c4150"/>
      <g fill="#dfe6ee"><rect x="348" y="57" width="38" height="16"/></g>
      <g fill="#5a6a8a"><rect x="351" y="59" width="8" height="12"/><rect x="363" y="59" width="8" height="12"/><rect x="375" y="59" width="8" height="12"/></g>
      <g fill="#e2e6ea" opacity=".8"><rect x="232" y="68" width="16" height="4"/><rect x="205" y="70" width="10" height="3"/><rect x="305" y="68" width="16" height="4"/></g>
      <rect x="172" y="83" width="219" height="3" fill="#6e6860"/>
      <rect x="181" y="86" width="210" height="90" fill="#bdac9b"/>
      <g fill="#f2f2f0"><rect x="205" y="88" width="18" height="22"/><rect x="234" y="88" width="17" height="25"/><rect x="380" y="88" width="11" height="20"/></g>
      <g fill="#6a8ab8"><rect x="207" y="90" width="14" height="18"/><rect x="236" y="90" width="13" height="21"/><rect x="382" y="90" width="8" height="16"/></g>
      <g fill="#4a4c56"><rect x="295" y="86" width="14" height="31"/><rect x="321" y="86" width="15" height="37"/></g>
      <rect x="280" y="86" width="2" height="50" fill="#e8e8e8"/>
      <rect x="113" y="124" width="113" height="52" fill="#b5a28f"/>
      <rect x="131" y="124" width="95" height="14" fill="#eceae6"/>
      <rect x="113" y="124" width="18" height="6" fill="#d8d4ce"/>
      <rect x="133" y="145" width="18" height="22" fill="#f0f0ee"/><rect x="135" y="147" width="14" height="17" fill="#4a4a4a"/>
      <rect x="189" y="140" width="10" height="36" fill="#7a5040"/>
      <rect x="199" y="140" width="23" height="35" fill="#f2f2f0"/>
      <g fill="#f0f0ee"><rect x="236" y="145" width="17" height="20"/><rect x="256" y="145" width="17" height="20"/><rect x="362" y="145" width="14" height="20"/><rect x="380" y="145" width="11" height="20"/></g>
      <g fill="#555"><rect x="238" y="147" width="13" height="16" opacity=".45"/><rect x="258" y="147" width="13" height="16" opacity=".45"/><rect x="364" y="147" width="10" height="16" opacity=".45"/></g>
      <rect x="274" y="123" width="82" height="64" fill="#aa9886"/>
      <rect x="274" y="123" width="8" height="64" fill="#c0b0a0"/>
      <g fill="#62a23c"><ellipse cx="60" cy="60" rx="85" ry="85"/><ellipse cx="110" cy="30" rx="45" ry="40"/><ellipse cx="30" cy="150" rx="45" ry="50"/><ellipse cx="100" cy="130" rx="35" ry="30"/></g>
      <g fill="#80be4c"><ellipse cx="75" cy="30" rx="45" ry="28"/><ellipse cx="120" cy="55" rx="25" ry="22"/><ellipse cx="40" cy="90" rx="30" ry="22"/></g>
      <g fill="#3e7a2a"><ellipse cx="50" cy="140" rx="40" ry="30"/><ellipse cx="120" cy="170" rx="22" ry="25"/><ellipse cx="158" cy="180" rx="14" ry="17"/><ellipse cx="285" cy="150" rx="8" ry="28"/></g>
      <path d="M0 140 L150 150 L170 200 L0 205 Z" fill="#4e8a34"/><ellipse cx="90" cy="190" rx="50" ry="14" fill="#5a9640"/><rect x="13" y="110" width="7" height="90" fill="#4a3c2e"/><rect x="45" y="120" width="6" height="60" fill="#4a3c2e"/>
      <rect x="60" y="160" width="45" height="30" fill="#3e4450"/>
      <rect x="0" y="165" width="40" height="30" fill="#7ab04a"/>
      <rect x="307" y="164" width="20" height="30" fill="#6aa040"/>
      <g fill="#3a3c40"><rect x="328" y="164" width="17" height="30"/><rect x="345" y="165" width="17" height="29"/></g>
      <rect x="365" y="158" width="26" height="28" fill="#c8beb4"/>
      <path d="M0 195 C60 200 120 210 190 175 L391 176 L391 261 L0 261 Z" fill="url(#pv)"/>
      <path d="M310 178 L391 178 L391 216 L345 216 Z" fill="#c6c6c2"/>
      <path d="M0 198 C40 205 90 212 150 218 L135 245 L60 258 L0 261 Z" fill="#8c877d" opacity=".85"/>
      <path d="M132 185 C150 180 185 185 192 192 L186 220 C170 222 150 222 132 216 Z" fill="#6a9444" opacity=".9"/>
      <rect x="150" y="228" width="30" height="8" fill="#5a5450"/>
    </svg>
    <div class="a" style="left:7px;top:38px;width:55px;height:17px;background:#e6e6e6;border-radius:2px"></div>
    <div class="t" style="left:10px;top:42px;font-size:9.5px;color:#333">Eyecatcher</div>
    <div class="a" style="left:64px;top:38px;width:27px;height:17px;background:#f49c0e;border-radius:2px"></div>
    <div class="t" style="left:68px;top:42px;font-size:9px;color:#fff;font-weight:bold">New</div>
    <svg class="a" style="left:4px;top:276px" width="52" height="16" viewBox="0 0 52 16"><path d="M2 2 H12 V13 H2 Z M6 13 L9 9 L12 13" fill="none" stroke="#fff" stroke-width="1.1"/><path d="M26 3.5 A5 5 0 1 0 29 7" fill="none" stroke="#fff" stroke-width="1.2"/><path d="M25 1 L27 3.5 L24.5 5" fill="none" stroke="#fff" stroke-width="1.1"/><path d="M39 2.5 V13.5 L47 8 Z" fill="none" stroke="#fff" stroke-width="1.2" stroke-linejoin="round"/></svg>
    <svg class="a" style="left:393px;top:32px" width="195" height="129" viewBox="0 0 195 129" preserveAspectRatio="none">
      <rect width="195" height="129" fill="#ebe9e5"/>
      <rect x="138" y="0" width="57" height="10" fill="#efedea"/>
      <rect x="168" y="0" width="27" height="129" fill="#e2dfda"/>
      <rect x="138" y="25" width="30" height="54" fill="#f4f4f2"/>
      <rect x="0" y="28" width="60" height="101" fill="#e2e0de"/>
      <rect x="3" y="30" width="55" height="45" fill="#b4b2b0"/>
      <rect x="7" y="44" width="47" height="22" fill="#5a5858"/>
      <rect x="20" y="34" width="20" height="4" fill="#333"/>
      <rect x="60" y="83" width="95" height="12" fill="#a8a6a2"/>
      <rect x="60" y="95" width="100" height="34" fill="#dcdad8"/>
      <rect x="84" y="66" width="17" height="18" fill="#d8b090"/>
      <rect x="122" y="70" width="18" height="12" fill="#d0d0ce"/>
      <path d="M49 129 C50 115 70 112 90 112 C105 112 112 118 112 129 Z" fill="#5c5c5e"/>
      <path d="M116 129 L116 110 C120 104 140 103 157 105 L158 129 Z" fill="#606062"/>
      <rect x="125" y="118" width="45" height="11" fill="#e6dcd2"/>
      <g fill="#78a040"><path d="M165 129 L172 95 L184 80 L194 82 L194 129 Z"/></g>
      <g fill="#e4a8a0"><ellipse cx="165" cy="88" rx="7" ry="6"/><ellipse cx="172" cy="108" rx="6" ry="5"/><ellipse cx="183" cy="72" rx="5" ry="5"/></g>
      <ellipse cx="176" cy="80" rx="8" ry="6" fill="#f4f0ea"/>
      <circle cx="177.5" cy="27" r="6.5" fill="#4a4e56"/>
    </svg>
    <svg class="a" style="left:393px;top:163px" width="195" height="130" viewBox="0 0 195 130" preserveAspectRatio="none">
      <rect width="195" height="130" fill="#f0f0ee"/>
      <rect x="16" y="0" width="162" height="13" fill="#f2f2f1"/>
      <rect x="0" y="0" width="66" height="130" fill="#eaecea"/>
      <g stroke="#b8bcb8" stroke-width="1.4"><path d="M37 2 V130"/><path d="M56 15 V130"/><path d="M65 20 V130"/><path d="M40 2 L65 22"/></g>
      <path d="M45 25 V70 C45 80 52 85 50 95" fill="none" stroke="#a0a0a0" stroke-width="1"/>
      <rect x="82" y="33" width="35" height="27" fill="#d9d6d0"/>
      <rect x="84" y="36" width="24" height="22" fill="#f0eeea"/>
      <rect x="80" y="76" width="41" height="31" fill="#f6f6f6"/>
      <path d="M80 91 H121" stroke="#d0d0d0" stroke-width="1"/>
      <path d="M58 130 L66 113 L132 113 L145 130 Z" fill="#3c3a38"/>
      <path d="M132 91 L195 95 L195 130 L150 130 L132 110 Z" fill="#f6f6f6"/>
      <path d="M132 91 L195 95" stroke="#d4d4d4" stroke-width="1"/>
      <rect x="56" y="113" width="10" height="17" fill="#7ab060" opacity=".5"/>
    </svg>
    <!-- info -->
    <svg class="a" style="left:36px;top:350px" width="116" height="26" viewBox="0 0 116 26"><path d="M3 16 L10 7 L8 18 Z" fill="#3a6fb8"/><path d="M11 6 L19 3 L13 13 Z" fill="#f2b21a"/><path d="M17 18 L24 9 L22 20 Z" fill="#e8453a"/><path d="M8 20 L14 15 L12 24 Z" fill="#2a5aa8"/><path d="M20 5 L26 4 L22 10 Z" fill="#3aa04a"/>
      <text x="41" y="10" font-family="Liberation Serif" font-style="italic" font-size="9.5" fill="#2a3a8a" letter-spacing="0.6">makelaardij</text>
      <text x="53" y="22" font-family="Liberation Sans" font-weight="bold" font-size="12" fill="#1a2a7a" letter-spacing="1.5">Kuilema</text></svg>
    <div class="t" style="left:197px;top:303px;font-size:12.5px;color:#0b6ab8;-webkit-text-stroke:0.35px #0b6ab8">Scheltemaheerd 89</div>
    <svg class="a" style="left:562px;top:301px" width="18" height="16" viewBox="0 0 18 16"><path d="M9 14.6 C6.5 12.2 2.8 9 2.4 6 C2 3.3 3.6 1.3 5.8 1.3 C7.3 1.3 8.4 2.2 9 3.4 C9.6 2.2 10.7 1.3 12.2 1.3 C14.4 1.3 16 3.3 15.6 6 C15.2 9 11.5 12.2 9 14.6 Z" fill="none" stroke="#0b6ab8" stroke-width="1.25" stroke-linejoin="round"/></svg>
    <div class="t lbl" style="left:197px;top:323px">9736 AL Groningen</div>
    <div class="t" style="left:197px;top:349px;font-size:13px;color:#111;-webkit-text-stroke:0.3px #111;letter-spacing:0.2px">€ 385,000 k.k.</div>
    <svg class="a" style="left:198px;top:370px" width="16" height="16" viewBox="0 0 16 16"><rect x="2" y="2" width="12" height="12" fill="none" stroke="#333" stroke-width="1.2"/><circle cx="2" cy="2" r="1.4" fill="#fff" stroke="#333" stroke-width="1"/><circle cx="14" cy="2" r="1.4" fill="#fff" stroke="#333" stroke-width="1"/><circle cx="2" cy="14" r="1.4" fill="#fff" stroke="#333" stroke-width="1"/><circle cx="14" cy="14" r="1.4" fill="#fff" stroke="#333" stroke-width="1"/></svg>
    <div class="t lbl" style="left:223px;top:372px">153 m<sup style="font-size:8px;vertical-align:4px">2</sup></div>
    <svg class="a" style="left:276px;top:370px" width="17" height="16" viewBox="0 0 17 16"><rect x="1" y="0.8" width="15" height="14.5" fill="none" stroke="#333" stroke-width="1.2"/><path d="M1 4.5 H6.5 V7.5 H10 V15" fill="none" stroke="#333" stroke-width="1.1"/></svg>
    <div class="t lbl" style="left:301px;top:372px">223 m<sup style="font-size:8px;vertical-align:4px">2</sup></div>
    <svg class="a" style="left:355px;top:370px" width="18" height="16" viewBox="0 0 18 16"><path d="M3 8 V3.5 Q3 2.5 4 2.5 H14 Q15 2.5 15 3.5 V8 M1.5 13 V9.5 Q1.5 8 3 8 H15 Q16.5 8 16.5 9.5 V13 Z M1.5 11 H16.5 M2.5 13 V14.5 M15.5 13 V14.5" fill="none" stroke="#333" stroke-width="1.1" stroke-linejoin="round"/><ellipse cx="9" cy="6" rx="2.6" ry="1.3" fill="none" stroke="#333" stroke-width="1"/></svg>
    <div class="t lbl" style="left:380px;top:372px">5</div>
    <svg class="a" style="left:404px;top:369px" width="12" height="17" viewBox="0 0 12 17"><path d="M7 1 L2.5 9 H6.5 L5 16 L9.5 7.5 H5.5 Z" fill="none" stroke="#333" stroke-width="1.1" stroke-linejoin="round"/></svg>
    <div class="t lbl" style="left:426px;top:372px">C</div>
    <div class="t" style="left:197px;top:410px;font-size:12.5px;color:#0b6ab8">Makelaardij Kuilema</div>
    <svg class="a" style="left:565px;top:407px" width="12" height="18" viewBox="0 0 12 18"><g fill="#1f55c0"><path d="M3 4 L3.5 1.5 L5 2.8 L6 1 L7 2.8 L8.5 1.5 L9 4 Z" opacity=".45"/><rect x="2" y="5" width="8" height="9"/><rect x="2" y="15.5" width="8" height="1.3" opacity=".55"/></g><g fill="#fff"><rect x="3.3" y="8" width="1.4" height="5"/><rect x="7.3" y="8" width="1.4" height="5"/><rect x="5.3" y="6" width="1.4" height="3"/></g></svg>
  </div>
  <!-- AD -->
  <div class="a" style="left:680px;top:1126px;width:184px;height:30px;overflow:hidden">
    <svg class="a" style="left:0;top:0" width="184" height="30" viewBox="0 0 184 30"><rect width="184" height="30" fill="#b4cce6"/><g fill="#e6eef6"><ellipse cx="50" cy="20" rx="40" ry="8"/><ellipse cx="100" cy="8" rx="20" ry="5"/><ellipse cx="85" cy="22" rx="25" ry="6"/><ellipse cx="165" cy="12" rx="15" ry="6"/></g><path d="M120 30 C118 10 125 2 135 1 C150 1 158 12 156 30 Z" fill="#5e7048"/><path d="M60 30 L78 20 L96 30 Z" fill="#f6f6f6" stroke="#444" stroke-width=".6"/></svg>
  </div>
  <div class="a" style="left:684px;top:1129px;width:59px;height:14px;background:#111"></div>
  <div class="t" style="left:686px;top:1131px;font-size:10.5px;color:#fff">Advertentie</div>
  <div class="t" style="left:884px;top:1136px;font-size:12.3px;color:#1a6ec0;-webkit-text-stroke:0.3px #1a6ec0">Luxe vakantiehuizen te koop</div>
  <div class="a" style="left:1243px;top:1127px;width:12px;height:12px;background:#d6dade"></div>
  <svg class="a" style="left:1244px;top:1128px" width="10" height="10" viewBox="0 0 10 10"><path d="M2 1 V9 L8 5 Z" fill="none" stroke="#4aa8e0" stroke-width="1.2"/></svg>
  <div class="a" style="left:1256px;top:1127px;width:12px;height:12px;background:#d6dade"></div>
  <svg class="a" style="left:1257px;top:1128px" width="10" height="10" viewBox="0 0 10 10"><path d="M1.5 1.5 L8.5 8.5 M8.5 1.5 L1.5 8.5" stroke="#4aa8e0" stroke-width="1.3"/></svg>

  <!-- RIGHT AD PANEL -->
  <div class="a" style="left:1295px;top:134px;width:242px;height:486px;background:#f8f8f8"></div>
  <svg class="a" style="left:1297px;top:137px" width="10" height="10" viewBox="0 0 10 10"><path d="M9 5 H1.5 M4.5 2 L1.5 5 L4.5 8" fill="none" stroke="#999" stroke-width="1"/></svg>
  <div class="t" style="left:1353px;top:139px;font-size:15px;color:#7d7d7d">Ads door <span style="font-size:17px">Google</span></div>
  <div class="a" style="left:1325px;top:161px;width:182px;height:25px;background:#4285f4;border-radius:1px;box-shadow:0 1px 1px rgba(0,0,0,.2)"></div>
  <div class="t" style="left:1369px;top:168px;font-size:12.5px;color:#fff;-webkit-text-stroke:0.3px #fff">Feedback sturen</div>
  <div class="a" style="left:1325px;top:191px;width:182px;height:25px;background:#fff;box-shadow:0 0 2px rgba(0,0,0,.3);border-radius:2px"></div>
  <div class="t" style="left:1333px;top:198px;font-size:12.5px;color:#888">Waarom deze advertentie?</div>
  <svg class="a" style="left:1487px;top:197px" width="11" height="12" viewBox="0 0 11 12"><path d="M1.5 1 V11 M3.5 2 V10 L9.5 6 Z" fill="none" stroke="#999" stroke-width="1"/></svg>
  </div>
  <!-- scrollbar -->
  <div class="a" style="left:1822px;top:44px;width:6px;height:157px;border-radius:3px;background:rgba(0,0,0,.1)"></div>
</div>
</body></html>
